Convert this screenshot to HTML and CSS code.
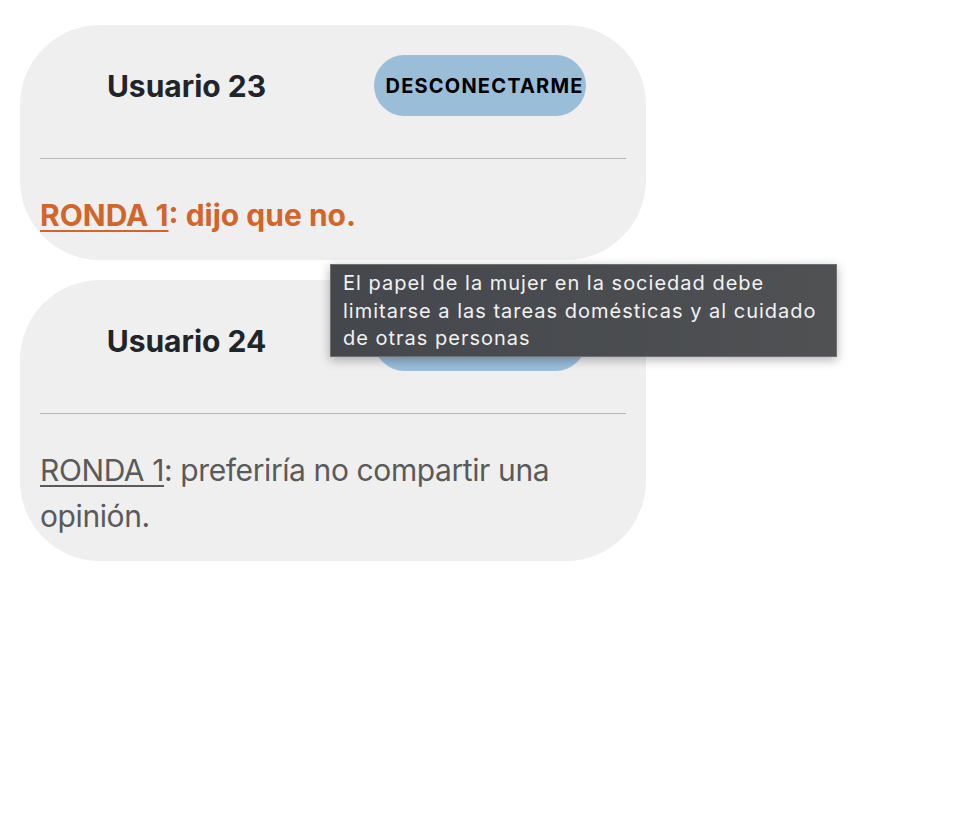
FILE: index.html
```html
<!DOCTYPE html>
<html lang="es">
<head>
<meta charset="utf-8">
<link rel="stylesheet" href="styles.css">
</head>
<body>
<main class="list">
  <section class="card">
    <div class="card-head">
      <div class="cell"><h2 class="user">Usuario 23</h2></div>
      <div class="cell"><button class="btn">DESCONECTARME</button></div>
    </div>
    <hr class="divider">
    <p class="answer answer-active"><a class="round" href="#">RONDA 1</a>: dijo que no.</p>
  </section>
  <section class="card">
    <div class="card-head">
      <div class="cell"><h2 class="user">Usuario 24</h2></div>
      <div class="cell"><button class="btn">DESCONECTARME</button></div>
    </div>
    <hr class="divider">
    <p class="answer"><a class="round" href="#">RONDA 1</a>: preferiría no compartir una opinión.</p>
  </section>
  <div class="tooltip">El papel de la mujer en la sociedad debe limitarse a las tareas domésticas y al cuidado de otras personas</div>
</main>
</body>
</html>
```
FILE: styles.css
```css
* { box-sizing: border-box; }
body {
  margin: 0;
  background: #fff;
  font-family: Inter, "Noto Sans", sans-serif;
}
.list {
  position: relative;
  width: 646px;
  padding: 25px 0 0 20px;
  display: flex;
  flex-direction: column;
  gap: 20px;
}
.card {
  width: 626px;
  background: #efefef;
  border-radius: 80px;
  padding: 30px 20px 22px;
}
.card-head {
  display: grid;
  grid-template-columns: 1fr 1fr;
  align-items: center;
  height: 61px;
}
.cell {
  display: flex;
  justify-content: center;
  align-items: center;
}
.user {
  margin: 0;
  font-size: 30px;
  font-weight: 700;
  color: #212529;
}
.btn {
  height: 61px;
  width: 212px;
  border: none;
  border-radius: 31px;
  background: #9abdd8;
  color: #000;
  font-family: Inter, "Noto Sans", sans-serif;
  font-weight: 700;
  font-size: 20px;
  letter-spacing: 1.2px;
  padding: 0 0 0 12px;
  text-align: left;
  white-space: nowrap;
  overflow: visible;
}
.divider {
  margin: 42px 0 33px;
  border: none;
  height: 1px;
  background: #b5b5b5;
}
.answer {
  margin: 0;
  font-size: 30px;
  line-height: 46px;
  color: #5a5a5a;
  letter-spacing: -0.4px;
}
.round { color: inherit; text-decoration: underline; text-underline-offset: 4px; text-decoration-thickness: 2px; }
.answer-active {
  color: #d2652c;
  font-weight: 700;
  letter-spacing: 0;
}
.tooltip {
  position: absolute;
  left: 330px;
  top: 264px;
  width: 507px;
  padding: 5px 12px 3px;
  background: linear-gradient(90deg, #44474c, #4f5153);
  border: 1px solid #6e6f72;
  color: #f2f2f2;
  font-family: Inter, "Noto Sans", sans-serif;
  font-size: 20px;
  letter-spacing: 1px;
  line-height: 27.5px;
  box-shadow: 0 3px 10px rgba(0,0,0,0.3);
}
```
